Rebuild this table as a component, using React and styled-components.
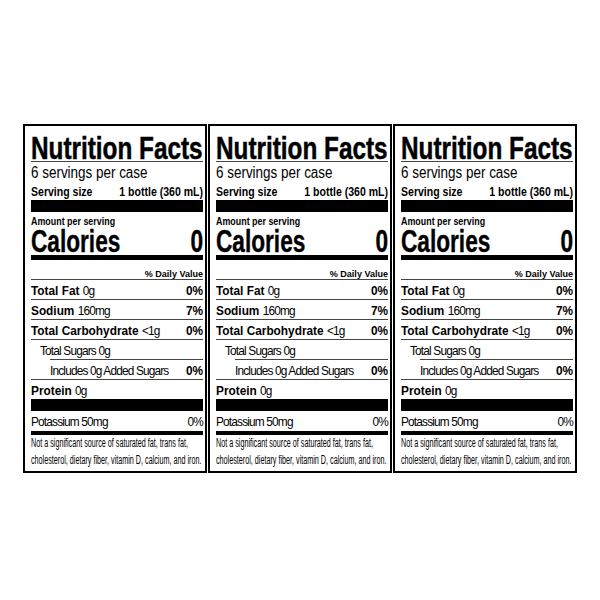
import React from "react";
import styled, { createGlobalStyle } from "styled-components";

const GlobalStyle = createGlobalStyle`
  html, body {
    margin: 0;
    padding: 0;
    background: #fff;
  }
  body {
    font-family: "Liberation Sans", Arial, sans-serif;
    color: #000;
  }
`;

// inner width of a panel; condensed lines are laid out wider and squeezed back
const INNER = 172;

const nutrients = [
  { name: "Total Fat", amount: "0g", dv: "0%" },
  { name: "Sodium", amount: "160mg", dv: "7%" },
  { name: "Total Carbohydrate", amount: "<1g", dv: "0%" },
];

const NutritionLabel = () => (
  <Panel>
    <Title $s={0.76}>Nutrition Facts</Title>
    <Rule />
    <Servings $s={0.84}>6 servings per case</Servings>
    <ServingSize $s={0.81}>
      <span>Serving size</span>
      <span>1 bottle (360 mL)</span>
    </ServingSize>
    <Bar $h={12} />
    <Amount $s={0.89}>Amount per serving</Amount>
    <Calories $s={0.73}>
      <span>Calories</span>
      <span>0</span>
    </Calories>
    <Bar $h={5} />
    <DailyValue $s={0.95}>% Daily Value</DailyValue>
    <Rule />
    {nutrients.map((n) => (
      <React.Fragment key={n.name}>
        <Row $s={0.91}>
          <span>
            <b>{n.name}</b> <Light>{n.amount}</Light>
          </span>
          <b>{n.dv}</b>
        </Row>
        <Rule />
      </React.Fragment>
    ))}
    <Row $s={0.91} $indent={9}>
      <Light>Total Sugars 0g</Light>
    </Row>
    <Rule $indent={19} />
    <Row $s={0.91} $indent={19}>
      <Light>Includes 0g Added Sugars</Light>
      <b>0%</b>
    </Row>
    <Rule />
    <Row $s={0.91}>
      <span>
        <b>Protein</b> <Light>0g</Light>
      </span>
    </Row>
    <Bar $h={12} />
    <Row $s={0.91} $h={20}>
      <Light>Potassium 50mg</Light>
      <Light>0%</Light>
    </Row>
    <Bar $h={4} />
    <Footnote $s={0.6}>
      Not a significant source of saturated fat, trans fat,
      <br />
      cholesterol, dietary fiber, vitamin D, calcium, and iron.
    </Footnote>
  </Panel>
);

const App = () => (
  <>
    <GlobalStyle />
    <Page>
      <Labels>
        <NutritionLabel />
        <NutritionLabel />
        <NutritionLabel />
      </Labels>
    </Page>
  </>
);

const Page = styled.div`
  width: 600px;
  height: 600px;
  box-sizing: border-box;
  padding: 124px 0 0 23px;
`;

const Labels = styled.div`
  display: flex;
  gap: 1px;
`;

const Panel = styled.section`
  width: 184px;
  height: 349px;
  box-sizing: border-box;
  border: 2px solid #000;
  padding: 0 2px 0 6px;
  overflow: hidden;
`;

// a text line set in a wider box and squeezed horizontally to a condensed face
const Squeezed = styled.div`
  box-sizing: border-box;
  width: ${({ $s }) => INNER / $s}px;
  transform: scaleX(${({ $s }) => $s});
  transform-origin: left top;
  white-space: nowrap;
`;

const Title = styled(Squeezed)`
  height: 35px;
  padding-top: 7px;
  font-size: 32px;
  line-height: 30px;
  font-weight: 700;
  -webkit-text-stroke: 0.5px #000;
`;

const Rule = styled.div`
  height: 1px;
  margin-left: ${({ $indent }) => $indent || 0}px;
  background: #444;
`;

const Bar = styled.div`
  height: ${({ $h }) => $h}px;
  background: #000;
`;

const Servings = styled(Squeezed)`
  height: 21px;
  font-size: 16px;
  line-height: 21px;
`;

const ServingSize = styled(Squeezed)`
  display: flex;
  justify-content: space-between;
  height: 17px;
  font-size: 13px;
  line-height: 17px;
  font-weight: 700;
`;

const Amount = styled(Squeezed)`
  height: 16px;
  padding-top: 4px;
  font-size: 10px;
  line-height: 12px;
  font-weight: 700;
`;

const Calories = styled(Squeezed)`
  display: flex;
  justify-content: space-between;
  height: 27px;
  font-size: 31px;
  line-height: 27px;
  font-weight: 700;
  -webkit-text-stroke: 0.4px #000;
`;

const DailyValue = styled(Squeezed)`
  height: 19px;
  padding-top: 9px;
  font-size: 9.5px;
  line-height: 10px;
  font-weight: 700;
  text-align: right;
`;

const Row = styled(Squeezed)`
  display: flex;
  justify-content: space-between;
  height: ${({ $h }) => $h || 19}px;
  padding-left: ${({ $indent, $s }) => ($indent || 0) / $s}px;
  font-size: 13px;
  line-height: 22px;

  & b {
    font-weight: 700;
  }
`;

const Light = styled.span`
  font-weight: 400;
  letter-spacing: -0.9px;
`;

const Footnote = styled(Squeezed)`
  height: 36px;
  font-size: 12px;
  line-height: 17px;
`;

export default App;
